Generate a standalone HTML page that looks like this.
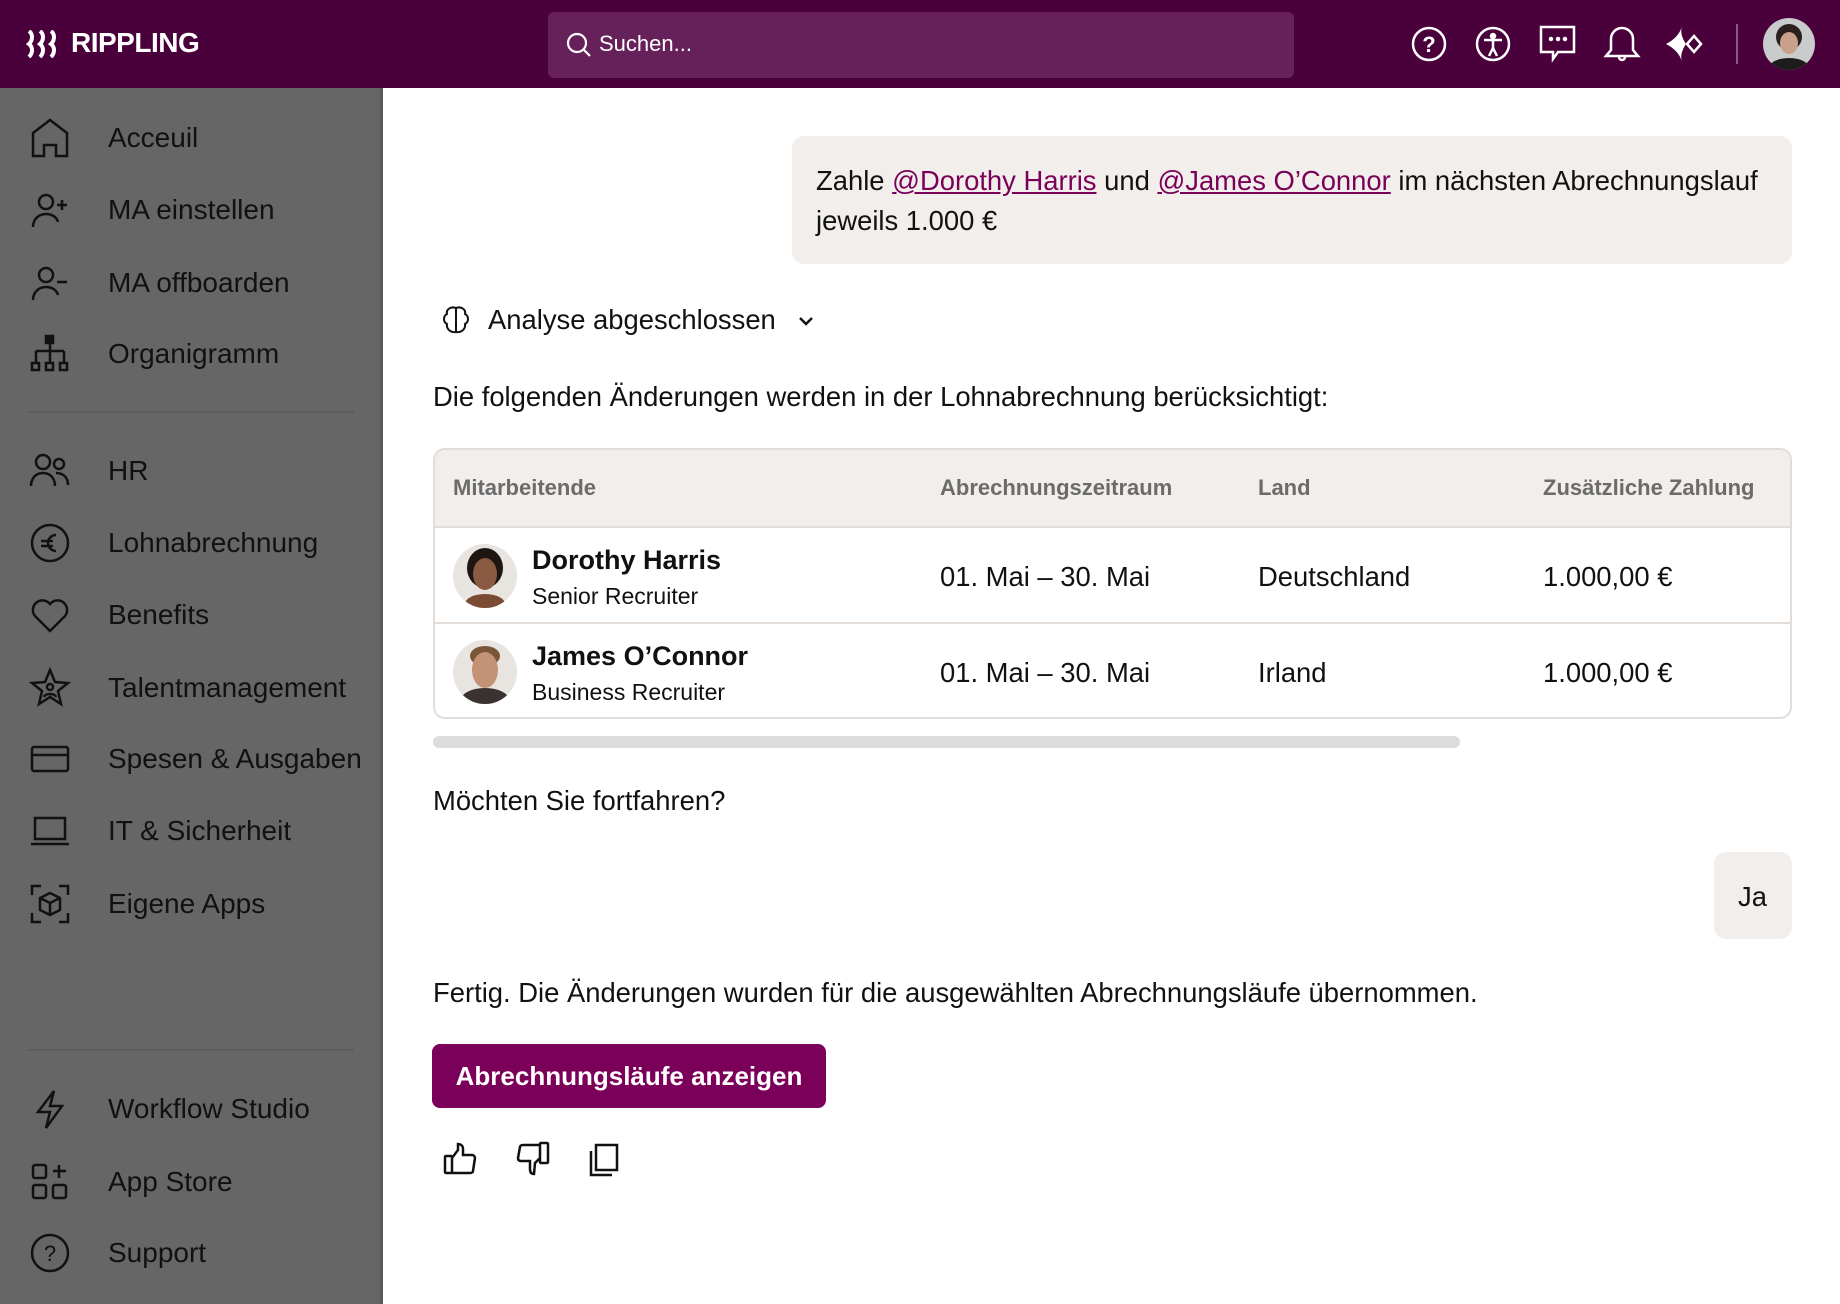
<!DOCTYPE html>
<html><head><meta charset="utf-8"><style>
*{margin:0;padding:0;box-sizing:border-box}
body{width:1840px;height:1304px;overflow:hidden;font-family:"Liberation Sans",sans-serif;background:#fff;color:#111;position:relative}
.a{position:absolute;white-space:nowrap}
#hdr{position:absolute;left:0;top:0;width:1840px;height:88px;background:#4a003a}
#side{position:absolute;left:0;top:88px;width:383px;height:1216px;background:#666;border-right:3px solid #5a5a5a}
.ni{position:absolute;left:108px;font-size:28px;color:#111;transform:translateY(-50%)}
.ic{position:absolute;left:29px;width:42px;height:42px;transform:translateY(-50%)}
.dv{position:absolute;left:29px;width:325px;height:2px;background:#5c5c5c}
.t{font-size:27.4px;color:#111}
.th{font-size:22px;color:#6b6b6b;font-weight:bold}
</style></head><body>
<div id="hdr">
 <svg class="a" style="left:26px;top:30px" width="36" height="28" viewBox="0 0 36 28" fill="none" stroke="#fff" stroke-width="4"><path d="M3 1c4 3 4 9 0 13c4 3 4 9 0 13M14 1c4 3 4 9 0 13c4 3 4 9 0 13M25 1c4 3 4 9 0 13c4 3 4 9 0 13"/></svg>
 <div class="a" style="left:71px;top:27px;color:#fff;font-size:28px;font-weight:bold;letter-spacing:-0.5px">RIPPLING</div>
 <div class="a" style="left:548px;top:12px;width:746px;height:66px;background:#66215a;border-radius:6px"></div>
 <svg class="a" style="left:566px;top:32px" width="26" height="26" viewBox="0 0 26 26" fill="none" stroke="#fff" stroke-width="2.2"><circle cx="11" cy="11" r="9"/><path d="M18 18l6 6"/></svg>
 <div class="a" style="left:599px;top:31px;color:#fff;font-size:22px">Suchen...</div>
 <svg class="a" style="left:1410px;top:25px" width="40" height="40" viewBox="0 0 40 40" fill="none" stroke="#fff" stroke-width="2.5"><circle cx="19" cy="19" r="16"/><text x="19" y="27" text-anchor="middle" fill="#fff" stroke="none" font-size="22" font-weight="bold" font-family="Liberation Sans">?</text></svg>
 <svg class="a" style="left:1474px;top:25px" width="40" height="40" viewBox="0 0 40 40" fill="none" stroke="#fff" stroke-width="2.5"><circle cx="19" cy="19" r="16"/><circle cx="19" cy="11" r="2" fill="#fff"/><path d="M10 15h18M19 15v8l-4 8M19 23l4 8"/></svg>
 <svg class="a" style="left:1538px;top:25px" width="40" height="40" viewBox="0 0 40 40" fill="none" stroke="#fff" stroke-width="2.5"><path d="M3 2h33v25H20l-5 7v-7H3z"/><circle cx="13" cy="14" r="1" fill="#fff"/><circle cx="20" cy="14" r="1" fill="#fff"/><circle cx="27" cy="14" r="1" fill="#fff"/></svg>
 <svg class="a" style="left:1602px;top:24px" width="40" height="40" viewBox="0 0 40 40" fill="none" stroke="#fff" stroke-width="2.5"><path d="M4 32h32l-5-6V15a11 11 0 0 0-22 0v11z"/><path d="M17 33a3 3 0 0 0 6 0"/></svg>
 <svg class="a" style="left:1664px;top:24px" width="42" height="40" viewBox="0 0 42 40" fill="#fff"><path d="M18 2C16 10 10 16 2 20c8 4 14 10 16 18c-2-6 0-12 4-18c-4-6-6-12-4-18z"/><path d="M30 12l7 8l-7 8l-7-8z" fill="none" stroke="#fff" stroke-width="2.5"/></svg>
 <div class="a" style="left:1736px;top:24px;width:2px;height:40px;background:#8a5a80"></div>
 <div class="a" style="left:1763px;top:18px;width:52px;height:52px;border-radius:50%;background:#c9cbcd;overflow:hidden"><div style="position:absolute;left:13px;top:6px;width:26px;height:26px;border-radius:50%;background:#2a211e"></div><div style="position:absolute;left:17px;top:14px;width:18px;height:22px;border-radius:50%;background:#c9a08a"></div><div style="position:absolute;left:6px;top:40px;width:40px;height:20px;border-radius:50% 50% 0 0;background:#1c1c1c"></div></div>
</div>
<div id="side">
<svg class="ic" style="top:50px" viewBox="0 0 42 42" fill="none" stroke="#111" stroke-width="2.5"><path d="M4 39V16L21 3l17 13v23H27V28H15v11z"/></svg>
<div class="ni" style="top:50px">Acceuil</div>
<svg class="ic" style="top:122px" viewBox="0 0 42 42" fill="none" stroke="#111" stroke-width="2.5"><circle cx="17" cy="13" r="7"/><path d="M4 38c0-8 6-13 13-13s11 4 12 8M28 16h10M33 11v10"/></svg>
<div class="ni" style="top:122px">MA einstellen</div>
<svg class="ic" style="top:195px" viewBox="0 0 42 42" fill="none" stroke="#111" stroke-width="2.5"><circle cx="17" cy="13" r="7"/><path d="M4 38c0-8 6-13 13-13s11 4 12 8M28 20h10"/></svg>
<div class="ni" style="top:195px">MA offboarden</div>
<svg class="ic" style="top:266px" viewBox="0 0 42 42" fill="none" stroke="#111" stroke-width="2.5"><rect x="17" y="3" width="7" height="7" fill="#111"/><path d="M21 10v8M7 18h28M7 18v12M21 18v12M35 18v12"/><rect x="3" y="30" width="7" height="7"/><rect x="17" y="30" width="7" height="7"/><rect x="31" y="30" width="7" height="7"/></svg>
<div class="ni" style="top:266px">Organigramm</div>
<div class="dv" style="top:323px"></div>
<svg class="ic" style="top:383px" viewBox="0 0 42 42" fill="none" stroke="#111" stroke-width="2.5"><circle cx="14" cy="12" r="7"/><circle cx="30" cy="14" r="5"/><path d="M2 36c0-8 5-13 12-13s12 5 12 13M27 23c7 0 12 4 12 12"/></svg>
<div class="ni" style="top:383px">HR</div>
<svg class="ic" style="top:455px" viewBox="0 0 42 42" fill="none" stroke="#111" stroke-width="2.5"><circle cx="21" cy="21" r="18"/><path d="M27 13a8 8 0 1 0 0 16M12 19h12M12 24h12"/></svg>
<div class="ni" style="top:455px">Lohnabrechnung</div>
<svg class="ic" style="top:527px" viewBox="0 0 42 42" fill="none" stroke="#111" stroke-width="2.5"><path d="M21 37L6 22a9 9 0 0 1 15-12a9 9 0 0 1 15 12z"/></svg>
<div class="ni" style="top:527px">Benefits</div>
<svg class="ic" style="top:600px" viewBox="0 0 42 42" fill="none" stroke="#111" stroke-width="2.5"><path d="M21 3l5 12l13 1l-10 8l3 13l-11-7l-11 7l3-13l-10-8l13-1z"/><circle cx="21" cy="20" r="3"/><path d="M15 30c1-4 11-4 12 0"/></svg>
<div class="ni" style="top:600px">Talentmanagement</div>
<svg class="ic" style="top:671px" viewBox="0 0 42 42" fill="none" stroke="#111" stroke-width="2.5"><rect x="3" y="9" width="36" height="24" rx="2"/><path d="M3 17h36"/></svg>
<div class="ni" style="top:671px">Spesen &amp; Ausgaben</div>
<svg class="ic" style="top:743px" viewBox="0 0 42 42" fill="none" stroke="#111" stroke-width="2.5"><rect x="6" y="8" width="30" height="21"/><path d="M2 34h38"/></svg>
<div class="ni" style="top:743px">IT &amp; Sicherheit</div>
<svg class="ic" style="top:816px" viewBox="0 0 42 42" fill="none" stroke="#111" stroke-width="2.5"><path d="M3 12V3h9M30 3h9v9M39 30v9h-9M12 39H3v-9"/><path d="M21 10l10 5v12l-10 5l-10-5V15z"/><path d="M11 15l10 5l10-5M21 20v12"/></svg>
<div class="ni" style="top:816px">Eigene Apps</div>
<div class="dv" style="top:961px"></div>
<svg class="ic" style="top:1021px" viewBox="0 0 42 42" fill="none" stroke="#111" stroke-width="2.5"><path d="M25 3L9 24h12l-4 16l16-22H21z"/></svg>
<div class="ni" style="top:1021px">Workflow Studio</div>
<svg class="ic" style="top:1094px" viewBox="0 0 42 42" fill="none" stroke="#111" stroke-width="2.5"><rect x="4" y="4" width="13" height="13" rx="2"/><rect x="4" y="24" width="13" height="13" rx="2"/><rect x="24" y="24" width="13" height="13" rx="2"/><path d="M30 4v13M24 10h13"/></svg>
<div class="ni" style="top:1094px">App Store</div>
<svg class="ic" style="top:1165px" viewBox="0 0 42 42" fill="none" stroke="#111" stroke-width="2.5"><circle cx="21" cy="21" r="18"/><text x="21" y="29" text-anchor="middle" fill="#111" stroke="none" font-size="22" font-family="Liberation Sans">?</text></svg>
<div class="ni" style="top:1165px">Support</div>
</div>

<div class="a" style="left:792px;top:136px;width:1000px;height:128px;background:#f1eeeb;border-radius:12px"></div>
<div class="a t" style="left:816px;top:161px;line-height:40px">Zahle <span style="color:#7a0059;text-decoration:underline">@Dorothy Harris</span> und <span style="color:#7a0059;text-decoration:underline">@James O’Connor</span> im nächsten Abrechnungslauf<br>jeweils 1.000 €</div>

<svg class="a" style="left:441px;top:305px" width="30" height="30" viewBox="0 0 30 30" fill="none" stroke="#111" stroke-width="2"><path d="M15 3v24M15 3c-6-2-10 2-9 6c-4 2-4 8 0 10c-1 5 4 9 9 8M15 3c6-2 10 2 9 6c4 2 4 8 0 10c1 5-4 9-9 8"/></svg>
<div class="a t" style="left:488px;top:304px">Analyse abgeschlossen</div>
<svg class="a" style="left:797px;top:314px" width="18" height="14" viewBox="0 0 18 14" fill="none" stroke="#111" stroke-width="2.5"><path d="M3 4l6 6l6-6"/></svg>
<div class="a t" style="left:433px;top:381px">Die folgenden Änderungen werden in der Lohnabrechnung berücksichtigt:</div>

<div class="a" style="left:433px;top:448px;width:1359px;height:271px;border:2px solid #e2ddd8;border-radius:12px;overflow:hidden">
 <div style="position:absolute;left:0;top:0;width:100%;height:78px;background:#f1eeeb;border-bottom:2px solid #e2ddd8"></div>
 <div style="position:absolute;left:0;top:172px;width:100%;height:2px;background:#e2ddd8"></div>
</div>
<div class="a th" style="left:453px;top:475px">Mitarbeitende</div>
<div class="a th" style="left:940px;top:475px">Abrechnungszeitraum</div>
<div class="a th" style="left:1258px;top:475px">Land</div>
<div class="a th" style="left:1543px;top:475px">Zusätzliche Zahlung</div>

<div class="a" style="left:453px;top:544px;width:64px;height:64px;border-radius:50%;background:#e8e4e0;overflow:hidden"><div style="position:absolute;left:14px;top:4px;width:36px;height:40px;border-radius:50%;background:#1e1612"></div><div style="position:absolute;left:20px;top:14px;width:24px;height:32px;border-radius:50%;background:#8a5a42"></div><div style="position:absolute;left:12px;top:50px;width:40px;height:20px;border-radius:50%;background:#7a4c36"></div></div>
<div class="a" style="left:532px;top:545px;font-size:27px;font-weight:bold">Dorothy Harris</div>
<div class="a" style="left:532px;top:583px;font-size:23px">Senior Recruiter</div>
<div class="a t" style="left:940px;top:561px">01. Mai – 30. Mai</div>
<div class="a t" style="left:1258px;top:561px">Deutschland</div>
<div class="a t" style="left:1543px;top:561px">1.000,00 €</div>

<div class="a" style="left:453px;top:640px;width:64px;height:64px;border-radius:50%;background:#e8e4e0;overflow:hidden"><div style="position:absolute;left:17px;top:6px;width:30px;height:20px;border-radius:50%;background:#7a5638"></div><div style="position:absolute;left:19px;top:12px;width:26px;height:36px;border-radius:50%;background:#c49274"></div><div style="position:absolute;left:8px;top:48px;width:48px;height:24px;border-radius:50%;background:#3a3230"></div></div>
<div class="a" style="left:532px;top:641px;font-size:27px;font-weight:bold">James O’Connor</div>
<div class="a" style="left:532px;top:679px;font-size:23px">Business Recruiter</div>
<div class="a t" style="left:940px;top:657px">01. Mai – 30. Mai</div>
<div class="a t" style="left:1258px;top:657px">Irland</div>
<div class="a t" style="left:1543px;top:657px">1.000,00 €</div>

<div class="a" style="left:433px;top:736px;width:1027px;height:12px;background:#dcdcdc;border-radius:6px"></div>

<div class="a t" style="left:433px;top:785px">Möchten Sie fortfahren?</div>
<div class="a" style="left:1714px;top:852px;width:78px;height:87px;background:#f1eeeb;border-radius:12px"></div>
<div class="a t" style="left:1738px;top:881px">Ja</div>
<div class="a t" style="left:433px;top:977px">Fertig. Die Änderungen wurden für die ausgewählten Abrechnungsläufe übernommen.</div>
<div class="a" style="left:432px;top:1044px;width:394px;height:64px;background:#7a0059;border-radius:8px;color:#fff;font-size:26px;font-weight:bold;text-align:center;line-height:64px">Abrechnungsläufe anzeigen</div>

<svg class="a" style="left:442px;top:1140px" width="36" height="36" viewBox="0 0 36 36" fill="none" stroke="#111" stroke-width="2.5"><rect x="3" y="16" width="7" height="17" rx="1"/><path d="M10 18l6-8V4c3 0 5 2 5 5v6h9c2 0 3 2 3 3l-2 13c0 1-1 2-3 2H10"/></svg>
<svg class="a" style="left:515px;top:1140px" width="36" height="38" viewBox="0 0 36 38" fill="none" stroke="#111" stroke-width="2.5"><rect x="25" y="3" width="8" height="20" rx="1"/><path d="M25 5H8c-2 0-3 1-3 2L3 18c0 2 1 3 3 3h9v8c0 4 2 5 4 5l1-11l5-5"/></svg>
<svg class="a" style="left:587px;top:1142px" width="34" height="36" viewBox="0 0 34 36" fill="none" stroke="#111" stroke-width="2.5"><rect x="9" y="3" width="21" height="25"/><path d="M4 9v24h21"/></svg>
</body></html>
